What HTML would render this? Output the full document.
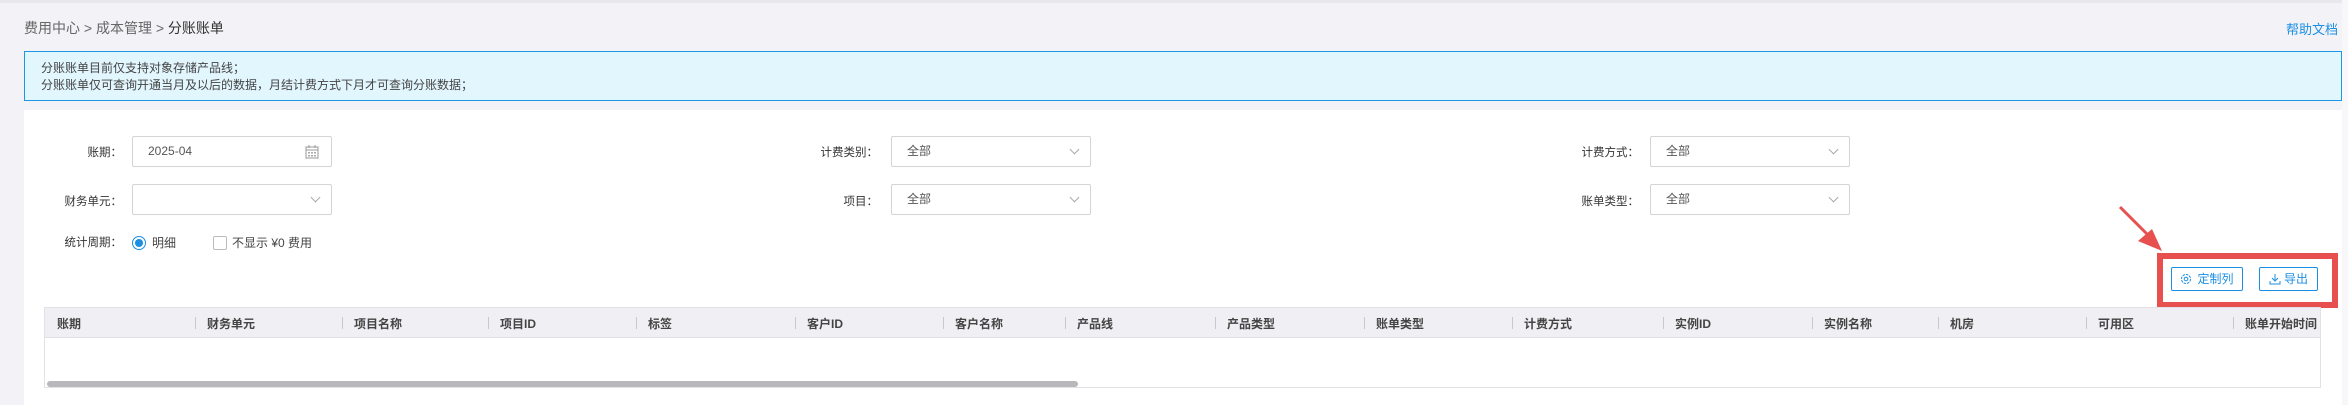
<!DOCTYPE html>
<html><head><meta charset="utf-8"><style>
*{box-sizing:border-box;margin:0;padding:0}
body{width:2348px;height:405px;background:#f3f3f7;font-family:"Liberation Sans","Noto Sans CJK SC",sans-serif;font-size:12px;color:#333;position:relative;overflow:hidden}
.a{position:absolute}
.topline{left:0;top:0;width:2348px;height:3px;background:#e8e8ec}
.bc{left:24px;top:18px;font-size:14px;color:#666}
.bc b{font-weight:normal;color:#333}
.help{left:2286px;top:19px;font-size:13px;color:#1a8fe3}
.notice{left:24px;top:51px;width:2318px;height:50px;background:#e2f6fe;border:1px solid #1e96e6;padding:8px 0 0 16px;line-height:17px;color:#444;font-size:12px}
.panel{left:24px;top:110px;width:2318px;height:295px;background:#fff}
.sb{left:2342px;top:0;width:6px;height:405px;background:#f7f7fa}
.lbl{font-size:11.5px;color:#333;text-align:right;width:122px}
.inp{height:31px;border:1px solid #d4d4d4;border-radius:2px;background:#fff;padding-left:15px;line-height:29px;color:#555}
.chev{position:absolute;right:12px;top:9px;width:7px;height:7px;border-right:1px solid #aaa;border-bottom:1px solid #aaa;transform:rotate(45deg)}
.tbl{left:44px;top:307px;width:2277px;height:81px;border:1px solid #e2e2e6;background:#fff;overflow:hidden}
.th{position:absolute;left:0;top:0;width:100%;height:30px;background:#f0f0f4;border-bottom:1px solid #e2e2e6}
.th span{position:absolute;top:7px;font-size:12px;font-weight:bold;color:#444;white-space:nowrap}
.th i{position:absolute;top:9px;width:1px;height:12px;background:#c8c8c8}
.btn{height:24px;border:1px solid #1a8fe3;border-radius:2px;color:#1a8fe3;font-size:12px;line-height:22px;text-align:center;background:#fff}
</style></head><body>
<div class="a topline"></div>
<div class="a bc">费用中心 &gt; 成本管理 &gt; <b>分账账单</b></div>
<div class="a help">帮助文档</div>
<div class="a notice">分账账单目前仅支持对象存储产品线；<br>分账账单仅可查询开通当月及以后的数据，月结计费方式下月才可查询分账数据；</div>
<div class="a panel"></div>
<div class="a sb"></div>

<div class="a lbl" style="left:0;top:144px">账期：</div>
<div class="a inp" style="left:132px;top:136px;width:200px">2025-04
<svg style="position:absolute;right:12px;top:8px" width="14" height="14" viewBox="0 0 14 14"><rect x="1" y="2" width="12" height="11" fill="none" stroke="#999"/><line x1="1" y1="5" x2="13" y2="5" stroke="#999"/><line x1="4" y1="0" x2="4" y2="3" stroke="#999"/><line x1="10" y1="0" x2="10" y2="3" stroke="#999"/><g fill="#aaa"><rect x="3" y="7" width="2" height="1.5"/><rect x="6" y="7" width="2" height="1.5"/><rect x="9" y="7" width="2" height="1.5"/><rect x="3" y="10" width="2" height="1.5"/><rect x="6" y="10" width="2" height="1.5"/><rect x="9" y="10" width="2" height="1.5"/></g></svg></div>
<div class="a lbl" style="left:756px;top:144px">计费类别：</div>
<div class="a inp" style="left:891px;top:136px;width:200px">全部<span class="chev"></span></div>
<div class="a lbl" style="left:1517px;top:144px">计费方式：</div>
<div class="a inp" style="left:1650px;top:136px;width:200px">全部<span class="chev"></span></div>

<div class="a lbl" style="left:0;top:193px">财务单元：</div>
<div class="a inp" style="left:132px;top:184px;width:200px"><span class="chev"></span></div>
<div class="a lbl" style="left:756px;top:193px">项目：</div>
<div class="a inp" style="left:891px;top:184px;width:200px">全部<span class="chev"></span></div>
<div class="a lbl" style="left:1517px;top:193px">账单类型：</div>
<div class="a inp" style="left:1650px;top:184px;width:200px">全部<span class="chev"></span></div>

<div class="a lbl" style="left:0;top:234px">统计周期：</div>
<div class="a" style="left:132px;top:236px;width:14px;height:14px;border:1px solid #1a8fe3;border-radius:50%"><div style="margin:2px;width:8px;height:8px;border-radius:50%;background:#1a8fe3"></div></div>
<div class="a" style="left:152px;top:234px;color:#444">明细</div>
<div class="a" style="left:213px;top:236px;width:14px;height:14px;border:1px solid #bbb;border-radius:2px"></div>
<div class="a" style="left:232px;top:234px;color:#444">不显示 ¥0 费用</div>

<svg class="a" style="left:2100px;top:195px" width="70" height="60"><line x1="20" y1="12" x2="50" y2="42" stroke="#e85050" stroke-width="3"/><polygon points="62,56 38,46 52,34" fill="#e85050"/></svg>
<div class="a" style="left:2157px;top:253px;width:181px;height:55px;border:6px solid #e85050"></div>
<div class="a btn" style="left:2171px;top:267px;width:72px"><svg width="12" height="12" viewBox="0 0 12 12" style="vertical-align:-2px;margin-right:5px"><circle cx="6" cy="6" r="4.5" fill="none" stroke="#1a8fe3" stroke-dasharray="2.5 1"/><circle cx="6" cy="6" r="1.8" fill="none" stroke="#1a8fe3"/></svg>定制列</div>
<div class="a btn" style="left:2259px;top:267px;width:59px"><svg width="12" height="12" viewBox="0 0 12 12" style="vertical-align:-2px;margin-right:3px"><path d="M6 1v7M3 5l3 3 3-3M1 8v3h10V8" fill="none" stroke="#1a8fe3"/></svg>导出</div>

<div class="a tbl">
<div class="th">
<span style="left:12px">账期</span>
<i style="left:150px"></i><span style="left:162px">财务单元</span>
<i style="left:297px"></i><span style="left:309px">项目名称</span>
<i style="left:443px"></i><span style="left:455px">项目ID</span>
<i style="left:591px"></i><span style="left:603px">标签</span>
<i style="left:750px"></i><span style="left:762px">客户ID</span>
<i style="left:898px"></i><span style="left:910px">客户名称</span>
<i style="left:1020px"></i><span style="left:1032px">产品线</span>
<i style="left:1170px"></i><span style="left:1182px">产品类型</span>
<i style="left:1319px"></i><span style="left:1331px">账单类型</span>
<i style="left:1467px"></i><span style="left:1479px">计费方式</span>
<i style="left:1618px"></i><span style="left:1630px">实例ID</span>
<i style="left:1767px"></i><span style="left:1779px">实例名称</span>
<i style="left:1893px"></i><span style="left:1905px">机房</span>
<i style="left:2041px"></i><span style="left:2053px">可用区</span>
<i style="left:2188px"></i><span style="left:2200px">账单开始时间</span>
</div>
<div style="position:absolute;left:2px;top:73px;width:1031px;height:6px;border-radius:3px;background:#b8b8bc"></div>
</div>
</body></html>
